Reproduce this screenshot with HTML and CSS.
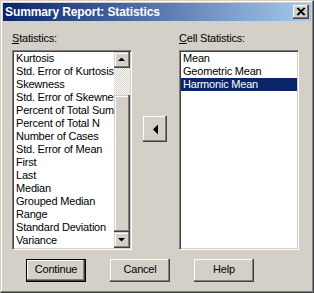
FILE: index.html
```html
<!DOCTYPE html>
<html>
<head>
<meta charset="utf-8">
<link rel="stylesheet" href="styles.css">
</head>
<body>
<div class="window">
  <div class="titlebar">
    <span class="title">Summary Report: Statistics</span>
    <div class="close">
      <svg width="16" height="14" viewBox="0 0 16 14"><path d="M4 3 L11 10 M5 3 L12 10 M11 3 L4 10 M12 3 L5 10" stroke="#000" stroke-width="1.1" fill="none"/></svg>
    </div>
  </div>
  <div class="content">
    <div class="panes">
      <div class="label"><u>S</u>tatistics:</div>
      <div></div>
      <div class="label"><u>C</u>ell Statistics:</div>

      <div class="listbox">
        <ul class="items">
          <li>Kurtosis</li>
          <li>Std. Error of Kurtosis</li>
          <li>Skewness</li>
          <li>Std. Error of Skewness</li>
          <li>Percent of Total Sum</li>
          <li>Percent of Total N</li>
          <li>Number of Cases</li>
          <li>Std. Error of Mean</li>
          <li>First</li>
          <li>Last</li>
          <li>Median</li>
          <li>Grouped Median</li>
          <li>Range</li>
          <li>Standard Deviation</li>
          <li>Variance</li>
        </ul>
        <div class="scrollbar">
          <div class="sbtn"><svg width="16" height="16" viewBox="0 0 16 16"><polygon points="4,9 11,9 7.5,5.5" fill="#000"/></svg></div>
          <div class="track"></div>
          <div class="thumb"></div>
          <div class="sbtn"><svg width="16" height="16" viewBox="0 0 16 16"><polygon points="4,6 11,6 7.5,9.5" fill="#000"/></svg></div>
        </div>
      </div>

      <div class="mid">
        <div class="arrow"><svg width="24" height="26" viewBox="0 0 24 26"><polygon points="15,8.5 15,18.5 10,13.5" fill="#000"/></svg></div>
      </div>

      <div class="listbox">
        <ul class="items">
          <li>Mean</li>
          <li>Geometric Mean</li>
          <li class="sel">Harmonic Mean</li>
        </ul>
      </div>
    </div>
    <div class="buttons">
      <div class="btn default">Continue</div>
      <div class="btn">Cancel</div>
      <div class="btn">Help</div>
    </div>
  </div>
</div>
</body>
</html>
```
FILE: styles.css
```css
html, body {
  margin: 0;
  padding: 0;
  background: #d4d0c8;
}
body {
  font-family: "Liberation Sans", Arial, sans-serif;
  font-size: 11px;
  letter-spacing: -0.2px;
  color: #000;
}
.window {
  width: 314px;
  height: 293px;
  box-sizing: border-box;
  border: 1px solid;
  border-color: #d4d0c8 #404040 #404040 #d4d0c8;
  box-shadow: inset -1px -1px #808080, inset 1px 1px #fff;
  padding: 2px;
  background: #d4d0c8;
  display: flex;
  flex-direction: column;
}
.titlebar {
  height: 18px;
  flex: none;
  background: linear-gradient(to right, #0a246a, #a6caf0);
  display: flex;
  align-items: center;
  justify-content: space-between;
}
.title {
  color: #fff;
  font-weight: bold;
  font-size: 12px;
  letter-spacing: -0.1px;
  padding-left: 2px;
  line-height: 18px;
}
.close {
  width: 16px;
  height: 14px;
  margin-right: 2px;
  background: #d4d0c8;
  box-shadow: inset -1px -1px #404040, inset -2px -2px #808080, inset 1px 1px #fff;
}
.close svg { display: block; }
.content {
  padding: 11px 0 0 9px;
}
.panes {
  display: grid;
  grid-template-columns: 120px 47px 120px;
  grid-template-rows: 13px 200px;
  row-gap: 5px;
}
.label {
  line-height: 13px;
  white-space: nowrap;
}
.listbox {
  box-sizing: border-box;
  height: 200px;
  border: 1px solid;
  border-color: #808080 #fff #fff #808080;
  box-shadow: inset 1px 1px #404040, inset -1px -1px #d4d0c8;
  padding: 1px;
  background: #fff;
  display: flex;
}
.items {
  list-style: none;
  margin: 0;
  padding: 0;
  flex: 1;
  min-width: 0;
  overflow: hidden;
}
.items li {
  height: 13px;
  line-height: 13px;
  padding-left: 2px;
  white-space: nowrap;
  overflow: hidden;
}
.items li.sel {
  background: #0a246a;
  color: #fff;
}
.scrollbar {
  width: 16px;
  flex: none;
  display: flex;
  flex-direction: column;
}
.sbtn, .thumb {
  background: #d4d0c8;
  box-shadow: inset -1px -1px #404040, inset -2px -2px #808080, inset 1px 1px #d4d0c8, inset 2px 2px #fff;
}
.sbtn { height: 16px; }
.sbtn svg { display: block; }
.track {
  height: 27px;
  background: repeating-conic-gradient(#fff 0 25%, #d4d0c8 0 50%) 0 0 / 2px 2px;
}
.thumb { height: 137px; }
.mid {
  display: flex;
  justify-content: flex-start;
  padding-left: 11px;
  padding-top: 66px;
}
.arrow {
  width: 24px;
  height: 26px;
  background: #d4d0c8;
  box-shadow: inset -1px -1px #404040, inset -2px -2px #808080, inset 1px 1px #fff;
}
.arrow svg { display: block; }
.buttons {
  display: flex;
  gap: 24px;
  margin-top: 9px;
  padding-left: 14px;
}
.btn {
  width: 60px;
  height: 23px;
  box-sizing: border-box;
  line-height: 21px;
  text-align: center;
  background: #d4d0c8;
  box-shadow: inset -1px -1px #404040, inset -2px -2px #808080, inset 1px 1px #fff;
}
.btn.default {
  border: 1px solid #000;
  line-height: 19px;
}
```
